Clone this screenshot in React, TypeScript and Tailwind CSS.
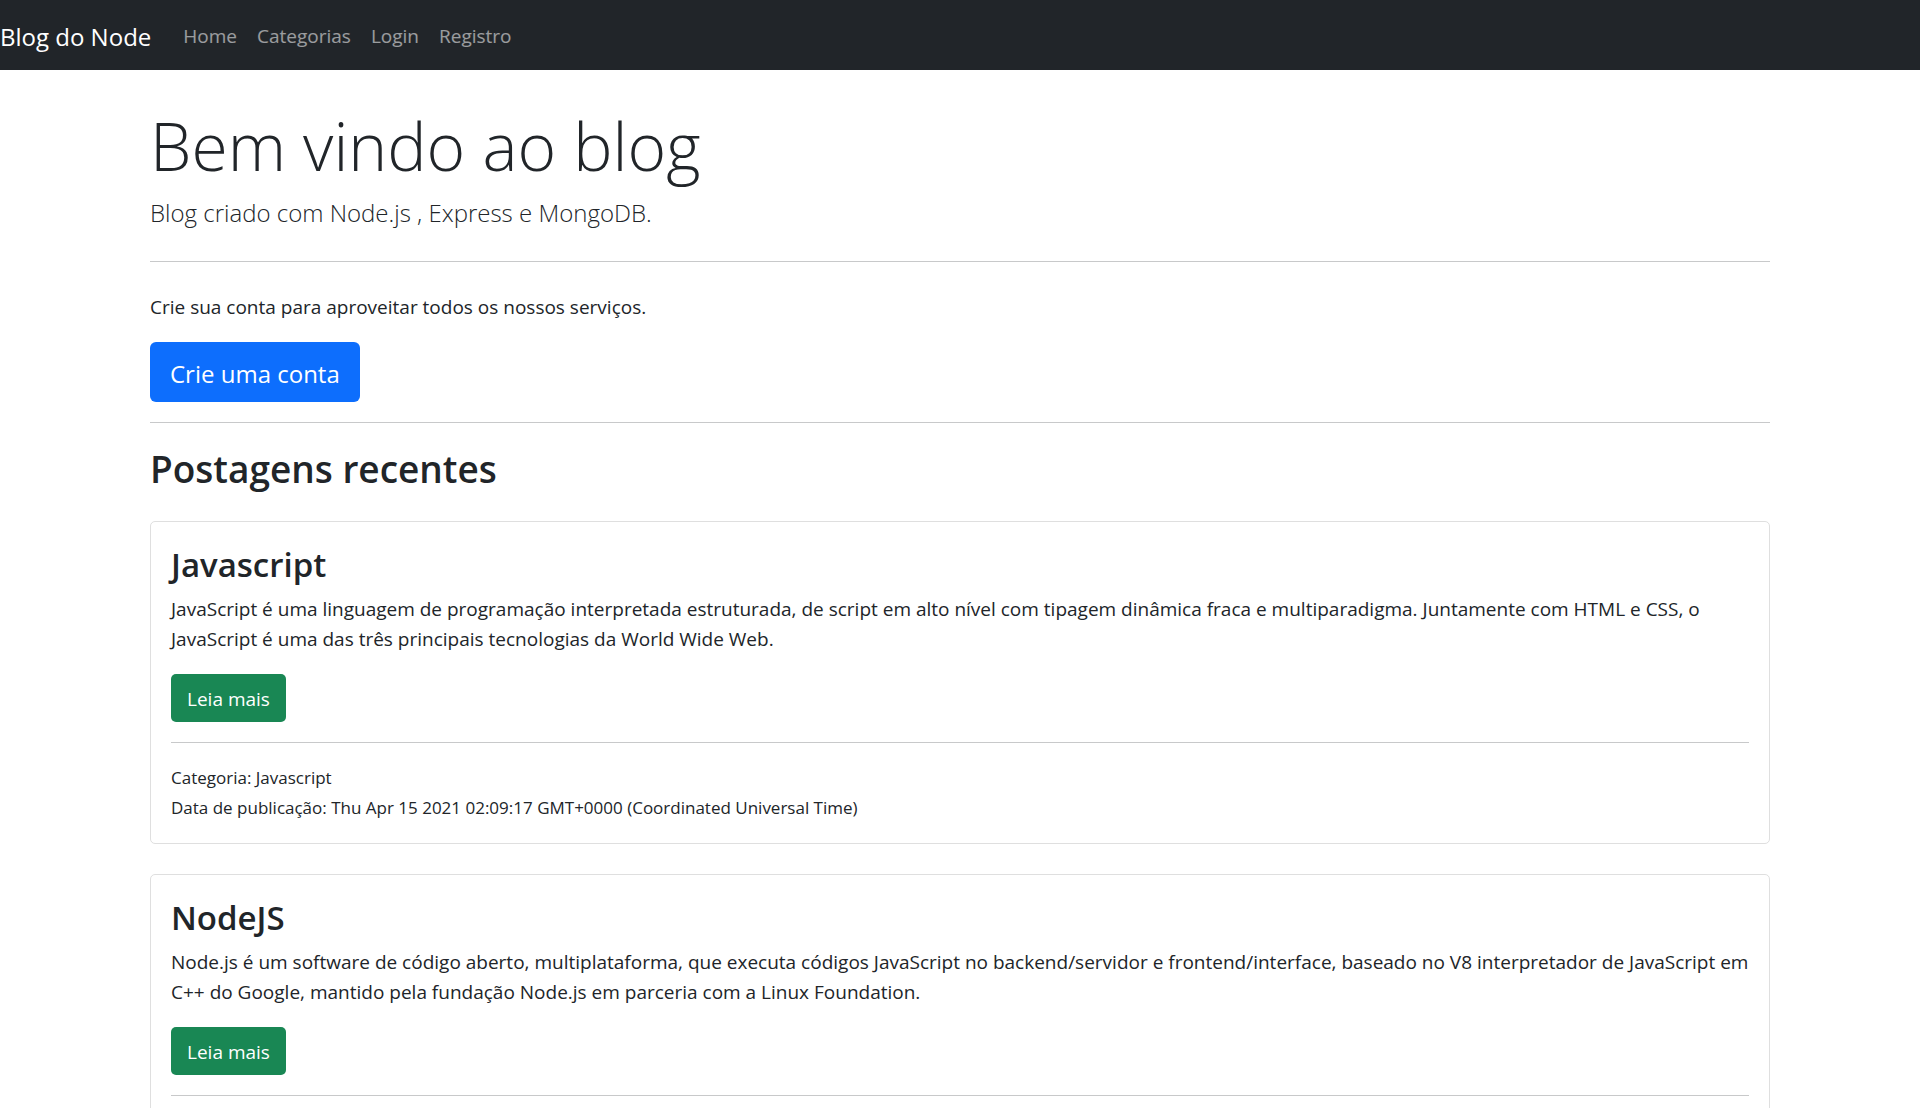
type Post = {
  title: string;
  text: string;
  details?: string[];
};

const links = ['Home', 'Categorias', 'Login', 'Registro'];

const posts: Post[] = [
  {
    title: 'Javascript',
    text: 'JavaScript é uma linguagem de programação interpretada estruturada, de script em alto nível com tipagem dinâmica fraca e multiparadigma. Juntamente com HTML e CSS, o JavaScript é uma das três principais tecnologias da World Wide Web.',
    details: [
      'Categoria: Javascript',
      'Data de publicação: Thu Apr 15 2021 02:09:17 GMT+0000 (Coordinated Universal Time)',
    ],
  },
  {
    title: 'NodeJS',
    text: 'Node.js é um software de código aberto, multiplataforma, que executa códigos JavaScript no backend/servidor e frontend/interface, baseado no V8 interpretador de JavaScript em C++ do Google, mantido pela fundação Node.js em parceria com a Linux Foundation.',
  },
];

function Navbar() {
  return (
    <nav className="flex min-h-[70px] flex-wrap items-center bg-[#212529] pt-3 pb-2">
      <a href="#" className="mr-[22px] text-[24px] leading-[38px] text-white">
        Blog do Node
      </a>
      <ul className="flex flex-wrap">
        {links.map((link) => (
          <li key={link}>
            <a href="#" className="block px-2.5 pb-0.5 text-[19px] leading-[30px] text-white/55 hover:text-white/75">
              {link}
            </a>
          </li>
        ))}
      </ul>
    </nav>
  );
}

function PostCard({ post }: { post: Post }) {
  return (
    <article className="mb-[30px] rounded-[5px] border border-[#dfdfdf] p-5">
      <h3 className="mb-1.5 text-[33px] leading-[46px] font-semibold">{post.title}</h3>
      <p className="mb-5">{post.text}</p>
      <button type="button" className="block h-12 rounded-[5px] bg-[#198754] px-4 pt-0.5 text-white">
        Leia mais
      </button>
      <hr className="my-5 border-[#c8c9ca]" />
      {post.details?.map((line) => (
        <small key={line} className="block text-[17px] leading-[30px]">
          {line}
        </small>
      ))}
    </article>
  );
}

export default function App() {
  return (
    <div className="bg-white font-['Open_Sans',sans-serif] text-[19px] leading-[30px] text-[#212529]">
      <Navbar />
      <main className="mx-auto max-w-[1650px] px-[15px] pt-[30px]">
        <header>
          <h1 className="mb-1 text-[66px] leading-[90px] font-light">Bem vindo ao blog</h1>
          <p className="text-[24px] leading-[37px] font-light">Blog criado com Node.js , Express e MongoDB.</p>
          <hr className="my-[30px] border-[#c8c9ca]" />
          <p className="mb-5">Crie sua conta para aproveitar todos os nossos serviços.</p>
          <a
            href="#"
            className="flex h-[60px] w-fit items-center rounded-md bg-[#0d6efd] px-5 pt-1 text-[24px] leading-[38px] text-white"
          >
            Crie uma conta
          </a>
          <hr className="my-5 border-[#c8c9ca]" />
        </header>
        <section>
          <h2 className="mb-[26px] text-[37px] leading-[52px] font-semibold">Postagens recentes</h2>
          {posts.map((post) => (
            <PostCard key={post.title} post={post} />
          ))}
        </section>
      </main>
    </div>
  );
}
